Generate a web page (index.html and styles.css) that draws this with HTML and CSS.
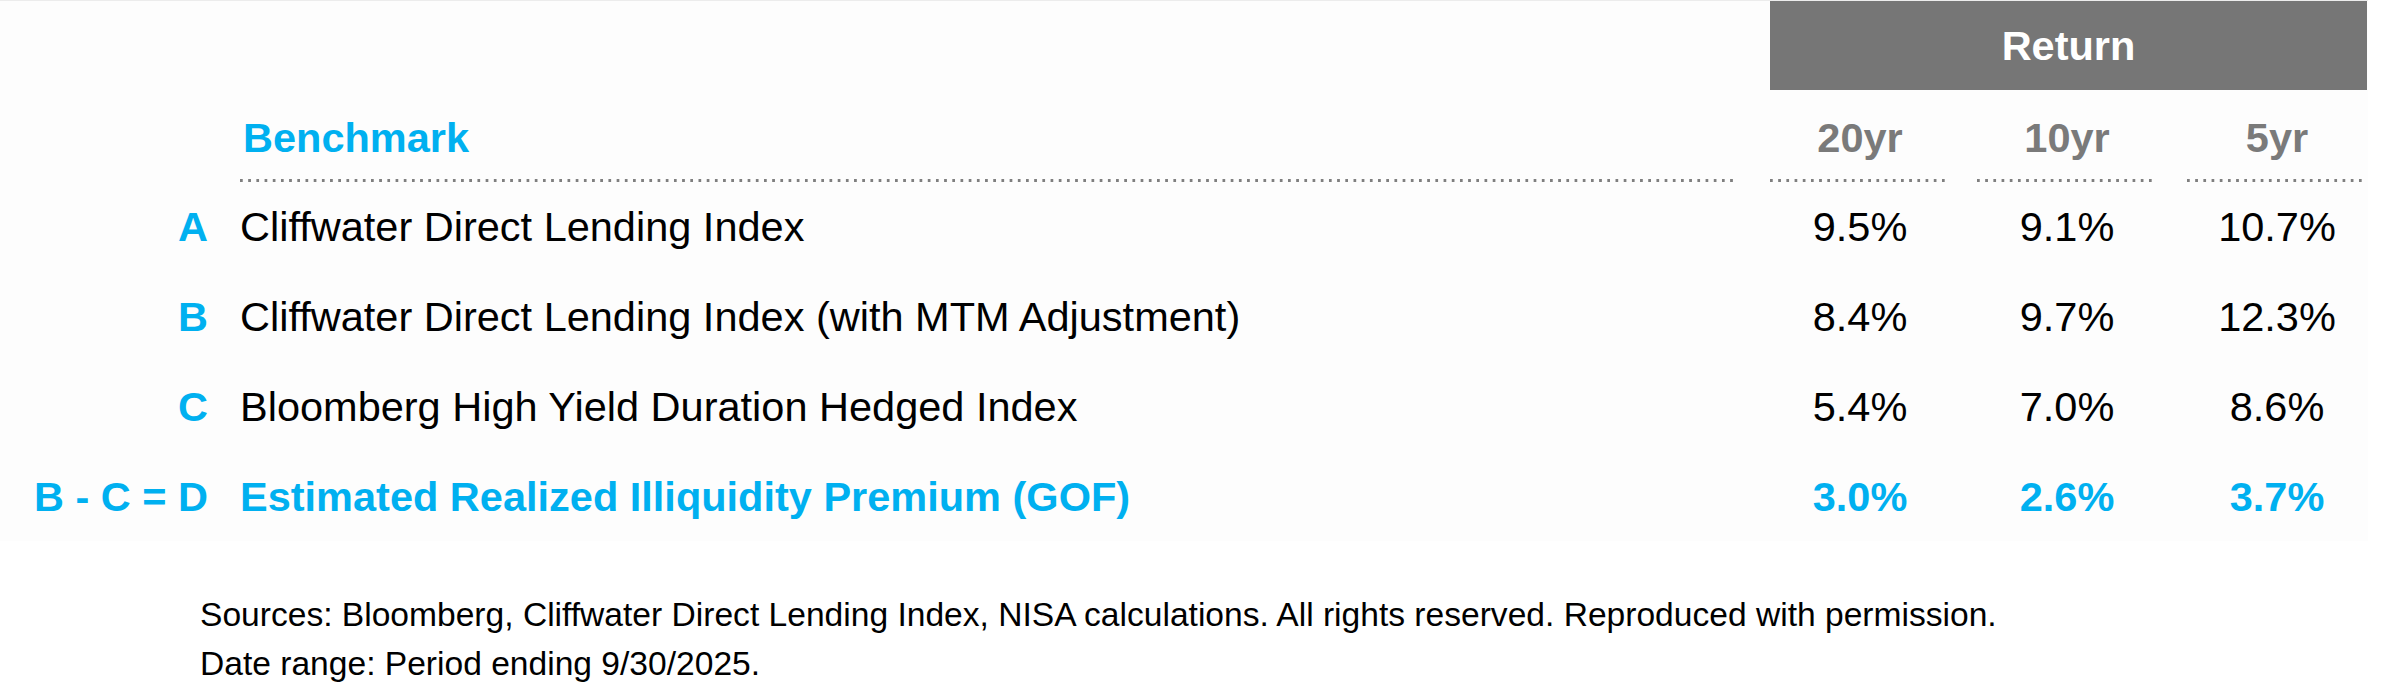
FILE: index.html
```html
<!DOCTYPE html>
<html lang="en">
<head>
<meta charset="utf-8">
<title>Illiquidity Premium</title>
<link rel="stylesheet" href="styles.css">
</head>
<body>
<div class="panel">
  <div class="grid">
    <div class="blank"></div>
    <div class="blank"></div>
    <div class="return">Return</div>

    <div class="lbl"></div>
    <div class="head name-h">Benchmark</div>
    <div class="head num-h c1">20yr</div>
    <div class="head num-h c2">10yr</div>
    <div class="head num-h c3">5yr</div>

    <div class="lbl">A</div>
    <div class="name">Cliffwater Direct Lending Index</div>
    <div class="num c1">9.5%</div>
    <div class="num c2">9.1%</div>
    <div class="num c3">10.7%</div>

    <div class="lbl">B</div>
    <div class="name">Cliffwater Direct Lending Index (with MTM Adjustment)</div>
    <div class="num c1">8.4%</div>
    <div class="num c2">9.7%</div>
    <div class="num c3">12.3%</div>

    <div class="lbl">C</div>
    <div class="name">Bloomberg High Yield Duration Hedged Index</div>
    <div class="num c1">5.4%</div>
    <div class="num c2">7.0%</div>
    <div class="num c3">8.6%</div>

    <div class="lbl">B - C = D</div>
    <div class="name total">Estimated Realized Illiquidity Premium (GOF)</div>
    <div class="num total c1">3.0%</div>
    <div class="num total c2">2.6%</div>
    <div class="num total c3">3.7%</div>
  </div>
</div>
<div class="notes">
  <p>Sources: Bloomberg, Cliffwater Direct Lending Index, NISA calculations. All rights reserved. Reproduced with permission.</p>
  <p>Date range: Period ending 9/30/2025.</p>
</div>
</body>
</html>
```
FILE: styles.css
```css
html, body {
  margin: 0;
  padding: 0;
  background: #ffffff;
}

body {
  font-family: "Liberation Sans", Arial, sans-serif;
  color: #000000;
}

.panel {
  width: 2368px;
  height: 541px;
  box-sizing: border-box;
  background: #fdfdfd;
  border-top: 1px solid #ececec;
}

.grid {
  display: grid;
  grid-template-columns: 240px 1530px 207px 210px 180px;
  grid-template-rows: 89px 92px 90px 90px 90px 90px;
  font-size: 41.5px;
  line-height: 48px;
}

.grid > div {
  display: flex;
  align-items: center;
  white-space: nowrap;
}

.return {
  grid-column: 3 / span 3;
  justify-content: center;
  background: #767676;
  color: #ffffff;
  font-weight: bold;
}

.head {
  padding-top: 3px;
  font-weight: bold;
  background-image: linear-gradient(90deg, #7f7f7f 0 3px, transparent 3px);
  background-size: 8.2px 3px;
  background-repeat: repeat-x;
  background-position: left bottom;
  background-origin: content-box;
  background-clip: content-box;
}

.name-h {
  color: #00b0f0;
  padding-right: 32px;
}

.name-h::before {
  content: "";
  width: 3px;
}

.num-h {
  color: #7a7a7a;
  justify-content: center;
}

.lbl {
  justify-content: flex-end;
  padding-right: 32px;
  color: #00b0f0;
  font-weight: bold;
}

.name {
  padding-right: 32px;
}

.num {
  justify-content: center;
}

.c1 { padding-right: 27px; }
.c2 { padding-right: 30px; }
.c3 { padding-right: 0; }

.total {
  color: #00b0f0;
  font-weight: bold;
}

.notes {
  padding: 49px 0 0 200px;
  font-size: 33.6px;
  line-height: 49px;
}

.notes p {
  margin: 0;
}
```
